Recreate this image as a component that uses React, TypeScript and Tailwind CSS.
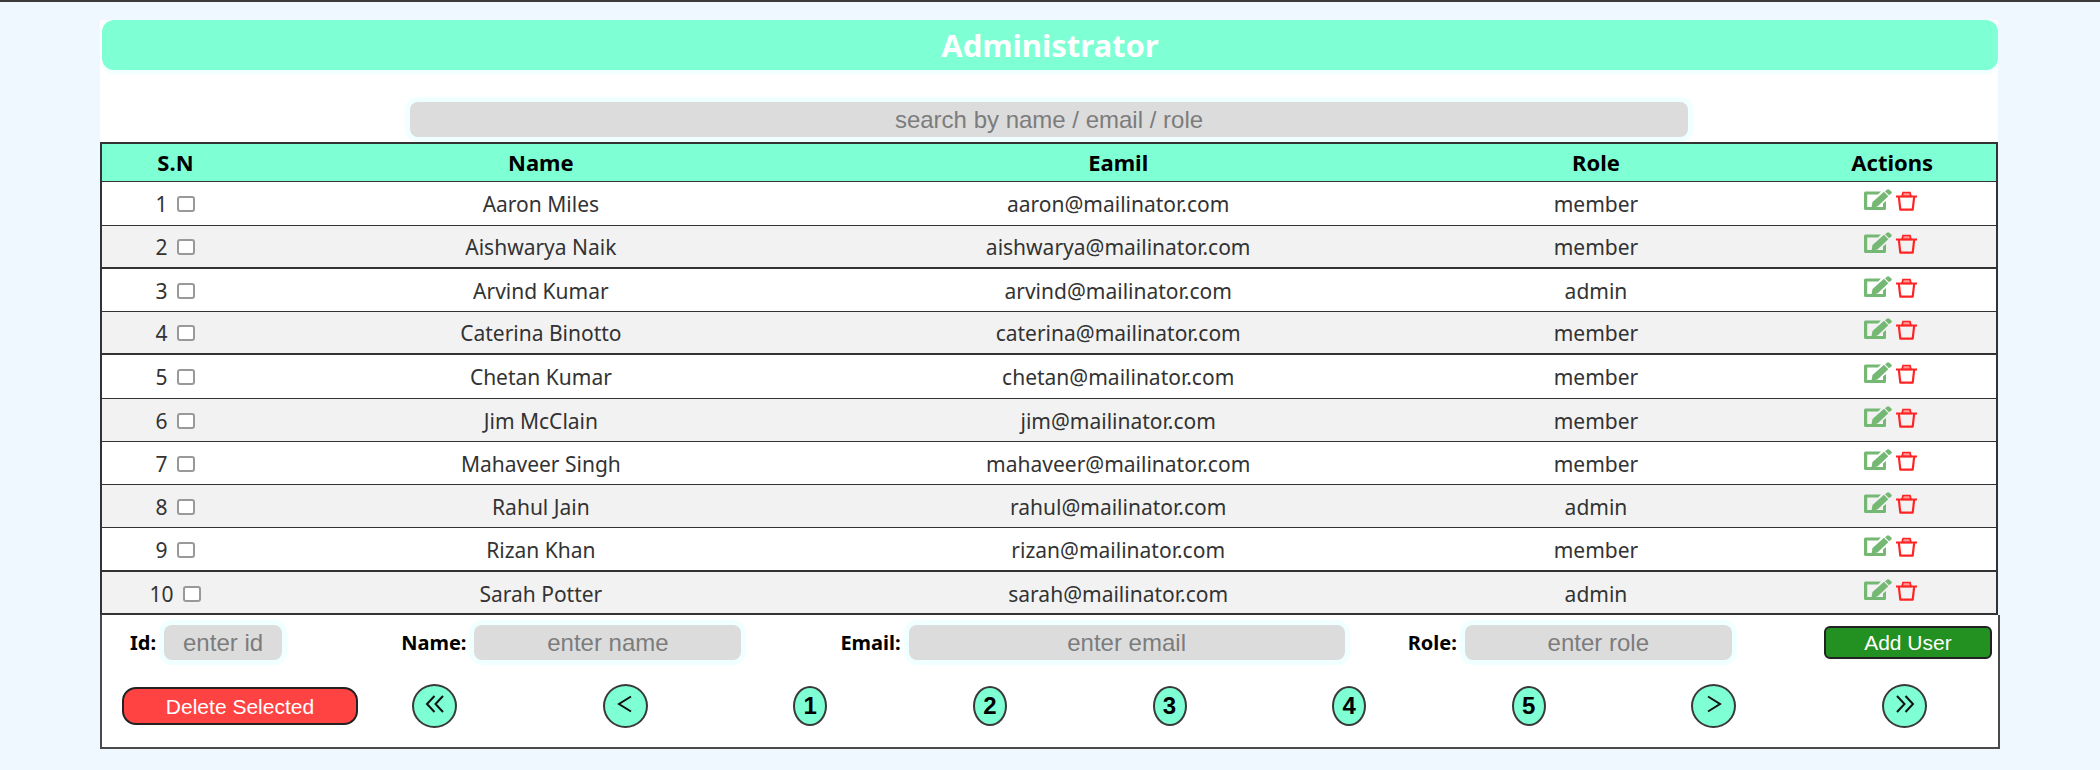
const users = [
  ["Aaron Miles", "aaron@mailinator.com", "member"],
  ["Aishwarya Naik", "aishwarya@mailinator.com", "member"],
  ["Arvind Kumar", "arvind@mailinator.com", "admin"],
  ["Caterina Binotto", "caterina@mailinator.com", "member"],
  ["Chetan Kumar", "chetan@mailinator.com", "member"],
  ["Jim McClain", "jim@mailinator.com", "member"],
  ["Mahaveer Singh", "mahaveer@mailinator.com", "member"],
  ["Rahul Jain", "rahul@mailinator.com", "admin"],
  ["Rizan Khan", "rizan@mailinator.com", "member"],
  ["Sarah Potter", "sarah@mailinator.com", "admin"],
];

const fields = [
  { id: "id", label: "Id:", hint: "enter id", width: "w-[118px]" },
  { id: "name", label: "Name:", hint: "enter name", width: "w-[267px]" },
  { id: "email", label: "Email:", hint: "enter email", width: "w-[436px]" },
  { id: "role", label: "Role:", hint: "enter role", width: "w-[267px]" },
];

const fieldClass =
  "h-[35px] min-w-0 rounded-lg bg-[#dcdcdc] text-center font-['Liberation_Sans',sans-serif] text-[24px] shadow-[0_0_0_5px_#f0ffff] outline-none placeholder:text-[#7c7c7c] placeholder:opacity-100";

const pageClass =
  "flex items-center justify-center rounded-[50%] border-2 border-[#3a3a3a] bg-[#7fffd4]";
const arrowClass = `${pageClass} h-11 w-[45px] pb-1`;
const numberClass = `${pageClass} h-10 w-[34px] font-['Liberation_Sans',sans-serif] text-[24px] font-bold`;

function EditIcon() {
  return (
    <svg viewBox="0 0 28 22" className="h-[22px] w-7 fill-[#74b874]">
      <path d="M1.500 2.500H17L14 5.400H3.200V18H19V14.500L22 12V19.500Q22 21 20.500 21H1.500Q0 21 0 19.500V4Q0 2.500 1.500 2.500Z" />
      <path d="M7.500 18.800L8.500 13L20 2.800L24.300 7.200L13.500 17.400Z" />
      <path d="M21 2.300L23.300.5Q24.300-.2 25.300.7L27.300 2.500Q28.300 3.500 27.300 4.500L25 6.300Z" />
    </svg>
  );
}

function TrashIcon() {
  return (
    <svg viewBox="0 0 21 20" className="h-5 w-[21px] fill-none stroke-[#ff2424]">
      <path d="M6 5.500L7 1.500H14L15 5.500Z" strokeWidth="1.700" className="fill-[#ff9a9a]" />
      <path d="M0 5.500H21M2.800 5.500L4.300 18.700H16.700L18.200 5.500" strokeWidth="2.200" strokeLinejoin="round" />
    </svg>
  );
}

function Chevron({ back = false, double = false }: { back?: boolean; double?: boolean }) {
  return (
    <svg
      viewBox="0 0 20 18"
      className={back ? "h-[18px] w-5 rotate-180" : "h-[18px] w-5"}
      fill="none"
      stroke="#111"
      strokeWidth="2"
    >
      {double ? <path d="M2 1L9.500 9L2 17M10.500 1L18 9L10.500 17" /> : <path d="M4 1.500L16 9L4 16.500" />}
    </svg>
  );
}

export default function App() {
  return (
    <div className="min-h-screen border-t-2 border-[#3a3a3a] bg-[#f0f8ff] pt-[18px] pr-[102px] pb-5 pl-[100px] font-['Noto_Sans',sans-serif] text-black">
      <main className="bg-white">
        <h1 className="ml-0.5 flex h-[50px] items-center justify-center rounded-[12px] bg-[#7fffd4] text-[31px] font-bold text-white shadow-[0_4px_2px_#f0ffff]">
          Administrator
        </h1>
        <div className="flex justify-center pt-8 pb-[5px]">
          <input
            aria-label="Search users"
            placeholder="search by name / email / role"
            className={`${fieldClass} w-[1278px] max-w-[80%]`}
          />
        </div>
        <table className="w-full table-fixed border-collapse border-2 border-[#333] text-center text-[21px] leading-6 text-[#333]">
          <colgroup>
            <col className="w-[7.8%]" />
            <col className="w-[30.8%]" />
            <col className="w-[30.1%]" />
            <col className="w-[20.3%]" />
            <col className="w-[11%]" />
          </colgroup>
          <thead className="bg-[#7fffd4] text-[22px] text-black">
            <tr className="h-[38px] border-b border-[#333]">
              <th>S.N</th>
              <th>Name</th>
              <th>Eamil</th>
              <th>Role</th>
              <th>Actions</th>
            </tr>
          </thead>
          <tbody>
            {users.map(([name, email, role], i) => (
              <tr
                key={name}
                className="h-[43px] border-b border-[#333] even:bg-[#f2f2f2] nth-2:border-b-2 nth-4:border-b-2 nth-9:border-b-2 nth-[4n+1]:h-11"
              >
                <td>
                  <label className="flex items-center justify-center gap-2.5 pt-0.5">
                    {i + 1}
                    <input
                      type="checkbox"
                      className="h-4 w-[18px] appearance-none rounded-[3px] border-2 border-[#999] bg-white"
                    />
                  </label>
                </td>
                <td className="pt-0.5">{name}</td>
                <td className="pt-0.5">{email}</td>
                <td className="pt-0.5">{role}</td>
                <td>
                  <div className="flex items-center justify-center gap-1 pr-1 pb-1">
                    <button aria-label={`Edit ${name}`} className="pb-0.5">
                      <EditIcon />
                    </button>
                    <button aria-label={`Delete ${name}`}>
                      <TrashIcon />
                    </button>
                  </div>
                </td>
              </tr>
            ))}
          </tbody>
        </table>
        <footer className="-mr-0.5 border-2 border-t-0 border-[#4a4a4a] bg-white pt-2.5 pb-[19px]">
          <form className="grid grid-cols-[271fr_439fr_567fr_416fr_168fr] items-center pr-1.5 pl-7">
            {fields.map((f) => (
              <div key={f.id} className="flex items-center gap-2">
                <label htmlFor={f.id} className="text-[20px] leading-7 font-bold">
                  {f.label}
                </label>
                <input id={f.id} placeholder={f.hint} className={`${fieldClass} ${f.width}`} />
              </div>
            ))}
            <button
              type="button"
              className="h-[33px] rounded-md border-2 border-[#222] bg-[#229122] font-['Liberation_Sans',sans-serif] text-[21px] leading-none text-white"
            >
              Add User
            </button>
          </form>
          <div className="mt-6 flex items-center pr-[71px] pl-5">
            <button className="h-[38px] w-[236px] rounded-[14px] border-2 border-[#222] bg-[#ff4242] font-['Liberation_Sans',sans-serif] text-[21px] leading-none text-white">
              Delete Selected
            </button>
            <nav aria-label="Pages" className="ml-[54px] flex flex-1 items-center justify-between">
              <button aria-label="First page" className={arrowClass}>
                <Chevron back double />
              </button>
              <button aria-label="Previous page" className={arrowClass}>
                <Chevron back />
              </button>
              {[1, 2, 3, 4, 5].map((n) => (
                <button key={n} className={numberClass}>
                  {n}
                </button>
              ))}
              <button aria-label="Next page" className={arrowClass}>
                <Chevron />
              </button>
              <button aria-label="Last page" className={arrowClass}>
                <Chevron double />
              </button>
            </nav>
          </div>
        </footer>
      </main>
    </div>
  );
}
